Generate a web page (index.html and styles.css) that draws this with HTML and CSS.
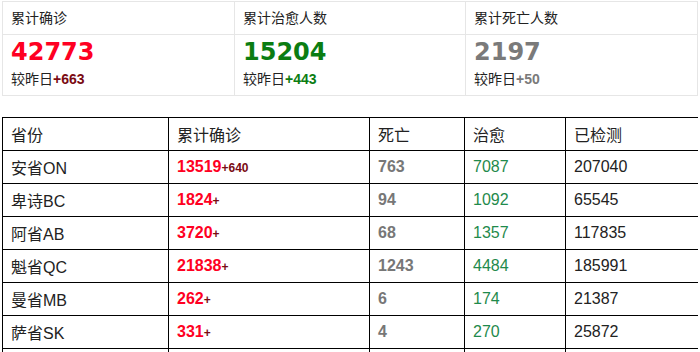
FILE: index.html
```html
<!DOCTYPE html>
<html lang="zh">
<head>
  <meta charset="UTF-8">
  <meta name="viewport" content="width=device-width, initial-scale=1.0">
  <title>加拿大疫情统计</title>
  <link rel="stylesheet" href="styles.css">
</head>
<body>
  <div class="summary">
    <div class="sum-head">累计确诊</div>
    <div class="sum-head">累计治愈人数</div>
    <div class="sum-head">累计死亡人数</div>
    <div class="sum-cell">
      <div class="big confirmed">42773</div>
      <div class="delta">较昨日<b class="d-red">+663</b></div>
    </div>
    <div class="sum-cell">
      <div class="big cured">15204</div>
      <div class="delta">较昨日<b class="d-green">+443</b></div>
    </div>
    <div class="sum-cell">
      <div class="big dead">2197</div>
      <div class="delta">较昨日<b class="d-gray">+50</b></div>
    </div>
  </div>

  <table class="prov">
    <colgroup>
      <col class="c-name"><col class="c-conf"><col class="c-dead"><col class="c-cure"><col class="c-test">
    </colgroup>
    <thead>
      <tr><th>省份</th><th>累计确诊</th><th>死亡</th><th>治愈</th><th>已检测</th></tr>
    </thead>
    <tbody>
      <tr><td>安省ON</td><td><b class="num-conf">13519</b><b class="num-add">+640</b></td><td class="num-dead">763</td><td class="num-cure">7087</td><td>207040</td></tr>
      <tr><td>卑诗BC</td><td><b class="num-conf">1824</b><b class="num-add">+</b></td><td class="num-dead">94</td><td class="num-cure">1092</td><td>65545</td></tr>
      <tr><td>阿省AB</td><td><b class="num-conf">3720</b><b class="num-add">+</b></td><td class="num-dead">68</td><td class="num-cure">1357</td><td>117835</td></tr>
      <tr><td>魁省QC</td><td><b class="num-conf">21838</b><b class="num-add">+</b></td><td class="num-dead">1243</td><td class="num-cure">4484</td><td>185991</td></tr>
      <tr><td>曼省MB</td><td><b class="num-conf">262</b><b class="num-add">+</b></td><td class="num-dead">6</td><td class="num-cure">174</td><td>21387</td></tr>
      <tr><td>萨省SK</td><td><b class="num-conf">331</b><b class="num-add">+</b></td><td class="num-dead">4</td><td class="num-cure">270</td><td>25872</td></tr>
      <tr><td>新省NS</td><td><b class="num-conf">850</b><b class="num-add">+</b></td><td class="num-dead">16</td><td class="num-cure">442</td><td>27463</td></tr>
    </tbody>
  </table>
</body>
</html>
```

FILE: styles.css
```css
* { box-sizing: border-box; }
body { margin: 1px 2px 0 2px; color: #333; font-family: "Liberation Sans", "Noto Sans CJK SC", sans-serif; background: #fff; }

.summary { display: grid; grid-template-columns: 232px 231px 232px; border-top: 1px solid #e6e6e6; border-left: 1px solid #e6e6e6; }
.sum-head, .sum-cell { border-right: 1px solid #e6e6e6; border-bottom: 1px solid #e6e6e6; }
.sum-head { height: 33px; padding: 0 8px; line-height: 32px; font-size: 14px; color: #222; }
.sum-cell { height: 61px; padding: 3px 8px 0; }
.big { font-family: "DejaVu Sans", sans-serif; font-weight: bold; font-size: 24px; line-height: 28px; }
.confirmed { color: #ff0022; }
.cured { color: #0b7d12; }
.dead { color: #7a7a7a; }
.delta { margin-top: 3px; font-size: 14px; line-height: 20px; color: #222; }
.delta b { font-family: "Liberation Sans", sans-serif; font-size: 14px; }
.d-red { color: #7a0a12; }
.d-green { color: #0b7d12; }
.d-gray { color: #7a7a7a; }

.prov { margin-top: 21px; width: 696px; border-collapse: collapse; table-layout: fixed; font-size: 16px; }
.c-name { width: 166px; }
.c-conf { width: 201px; }
.c-dead { width: 95px; }
.c-cure { width: 101px; }
.c-test { width: 133px; }
.prov th, .prov td { border: 1px solid #000; height: 33px; padding: 0 8px; text-align: left; font-weight: normal; color: #222; white-space: nowrap; }
.prov td.num-dead { color: #777; font-weight: bold; }
.prov td.num-cure { color: #1f8a4c; }
.num-conf { color: #ff0022; }
.num-add { color: #7a0a12; font-size: 12px; }
```
